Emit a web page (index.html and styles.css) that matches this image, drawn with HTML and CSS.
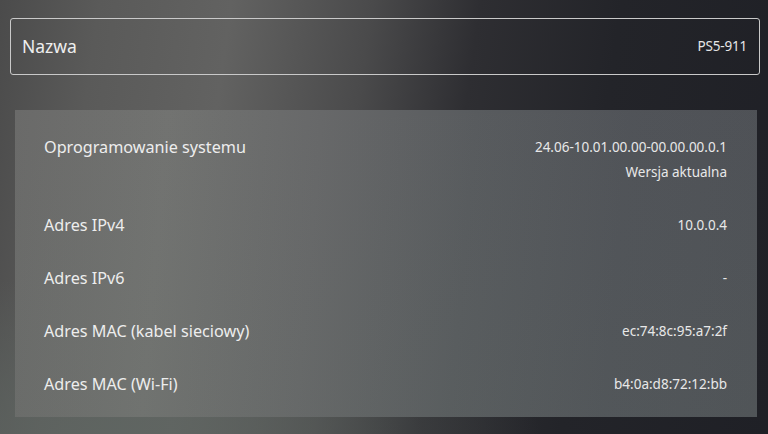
FILE: index.html
```html
<!DOCTYPE html>
<html lang="pl">
<head>
<meta charset="utf-8">
<title>Informacje o konsoli</title>
<link rel="stylesheet" href="styles.css">
</head>
<body>
<div class="screen">
  <div class="name-box">
    <span class="name-label">Nazwa</span>
    <span class="name-value">PS5-911</span>
  </div>
  <div class="panel">
    <div class="row">
      <span class="label">Oprogramowanie systemu</span>
      <div class="values">
        <span class="value">24.06-10.01.00.00-00.00.00.0.1</span>
        <span class="value">Wersja aktualna</span>
      </div>
    </div>
    <div class="row">
      <span class="label">Adres IPv4</span>
      <span class="value">10.0.0.4</span>
    </div>
    <div class="row">
      <span class="label">Adres IPv6</span>
      <span class="value">-</span>
    </div>
    <div class="row">
      <span class="label">Adres MAC (kabel sieciowy)</span>
      <span class="value">ec:74:8c:95:a7:2f</span>
    </div>
    <div class="row">
      <span class="label">Adres MAC (Wi-Fi)</span>
      <span class="value">b4:0a:d8:72:12:bb</span>
    </div>
  </div>
</div>
</body>
</html>
```
FILE: styles.css
```css
html, body {
  margin: 0;
  padding: 0;
}
body {
  width: 768px;
  height: 434px;
  overflow: hidden;
  font-family: "Noto Sans", "Open Sans", sans-serif;
  color: #ececec;
}
.screen {
  width: 768px;
  height: 434px;
  box-sizing: border-box;
  padding: 18px 8px 0 10px;
  background:
    radial-gradient(ellipse 420px 160px at 120px 434px, rgba(95,102,98,0.85) 0%, rgba(95,102,98,0) 100%),
    linear-gradient(98deg, #4b4b4b 0%, #5a5a59 12%, #626261 28%, #4a4a4b 45%, #2e2e32 58%, #232429 75%, #1f2026 100%);
}
.name-box {
  height: 57px;
  box-sizing: border-box;
  border: 1.5px solid #c9c9c9;
  border-radius: 3px;
  display: flex;
  align-items: center;
  justify-content: space-between;
  padding: 0 12px 2px 11px;
}
.name-label {
  font-size: 17.5px;
  color: #eeeeee;
}
.name-value {
  font-size: 13.5px;
  letter-spacing: -0.2px;
  color: #e6e6e6;
}
.panel {
  margin: 35px 3px 0 5px;
  height: 307px;
  box-sizing: border-box;
  padding: 25px 30px 0 28px;
  background:
    linear-gradient(180deg, rgba(255,255,255,0.02) 0%, rgba(120,135,125,0.12) 100%),
    linear-gradient(95deg, #676766 0%, #6f706e 20%, #646566 40%, #55585b 60%, #4d5055 80%, #4b4e53 100%);
  display: flex;
  flex-direction: column;
  gap: 29px;
}
.row {
  display: flex;
  justify-content: space-between;
  align-items: flex-start;
  line-height: 24px;
}
.label {
  font-size: 16.2px;
  color: #ededed;
  padding-left: 1px;
}
.values {
  display: flex;
  flex-direction: column;
  align-items: flex-end;
  gap: 1px;
}
.value {
  font-size: 13.5px;
  color: #e8e8e8;
}
```
